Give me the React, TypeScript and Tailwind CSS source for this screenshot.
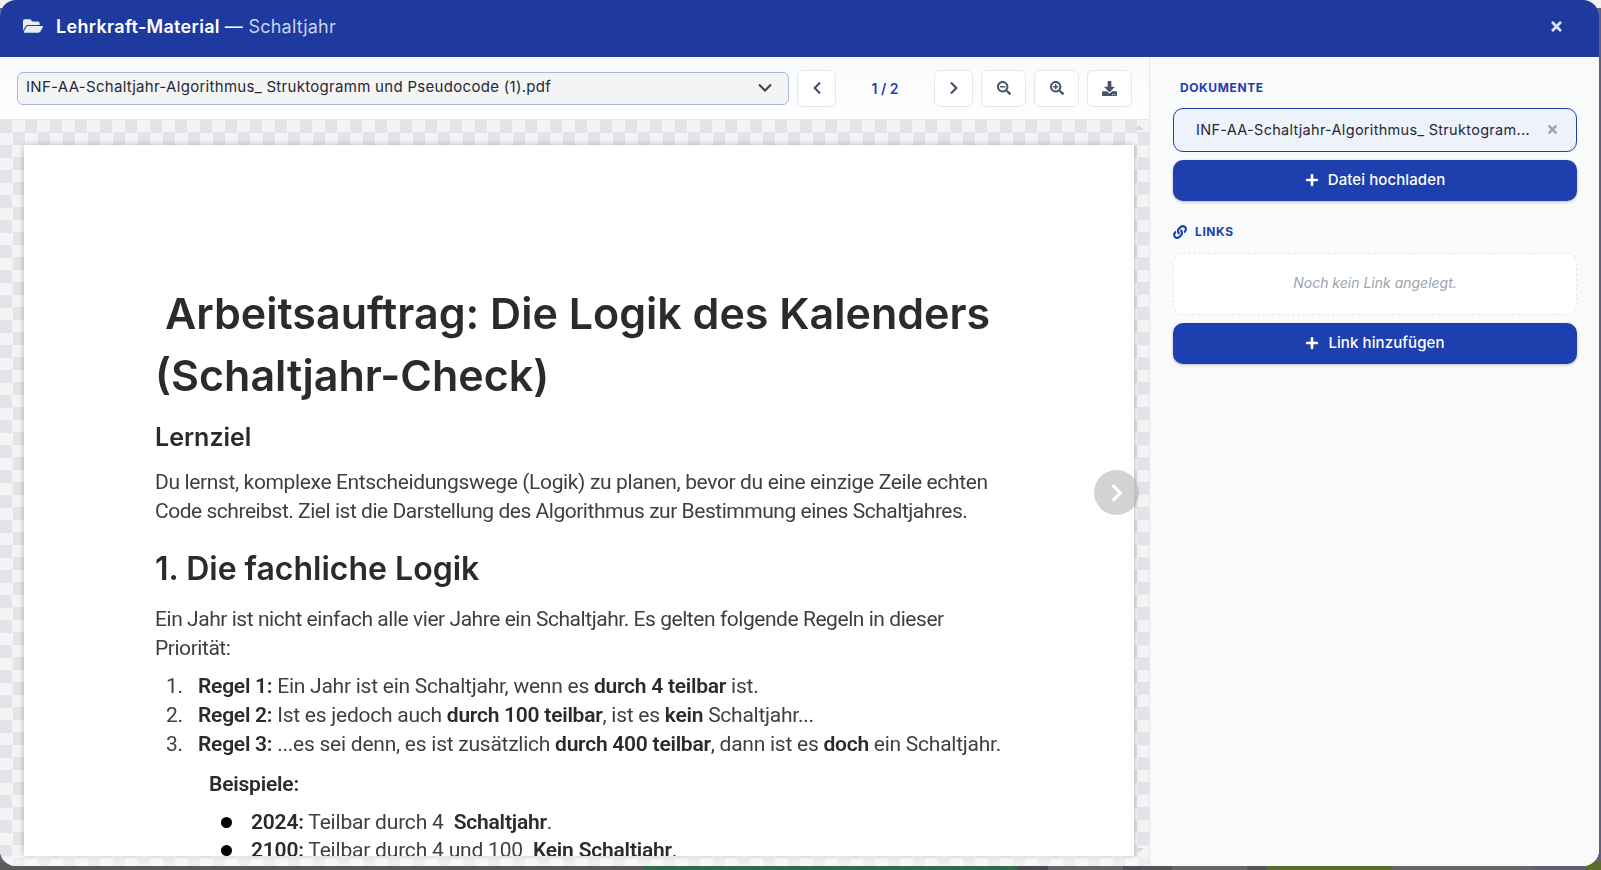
import { FaChevronLeft, FaChevronRight, FaDownload, FaFolderOpen, FaLink, FaPlus, FaSearchMinus, FaSearchPlus, FaTimes } from 'react-icons/fa';

const backdropStrip = [
  { width: 644, color: 'bg-[#5a5a5c]' },
  { width: 373, color: 'bg-[#2f6b4f]' },
  { width: 31, color: 'bg-[#4b4b50]' },
  { width: 75, color: 'bg-[#666668]' },
  { width: 19, color: 'bg-[#505054]' },
  { width: 30, color: 'bg-[#555558]' },
  { width: 75, color: 'bg-[#666668]' },
  { width: 20, color: 'bg-[#555558]' },
  { width: 125, color: 'bg-[#5a6b2a]' },
  { width: 141, color: 'bg-[#666668]' },
  { width: 52, color: 'bg-[#5e5e70]' },
  { width: 16, color: 'bg-[#5a6b2a]' },
];

function ToolButton({ className, children }: { className: string; children: React.ReactNode }) {
  return (
    <button className={`flex h-[37px] items-center justify-center rounded-md border border-[#e2e8f0] bg-white text-[#475569] ${className}`}>
      {children}
    </button>
  );
}

function BlueButton({ label }: { label: string }) {
  return (
    <button className="flex h-[41px] w-full items-center justify-center gap-[9px] rounded-[10px] bg-[#1e40af] pb-[1px] text-[15px] font-medium tracking-[0.1px] text-white shadow-[0_1px_3px_rgba(0,0,0,0.25)]">
      <FaPlus className="text-[14px]" />
      {label}
    </button>
  );
}

function Strong({ children }: { children: React.ReactNode }) {
  return <b className="font-semibold text-[#2b2b2b]">{children}</b>;
}

function PdfPage() {
  return (
    <div className="h-[711px] w-[1110px] overflow-hidden bg-white pl-[131px] pt-[137px] font-['Roboto',sans-serif] text-[#3f3f3f] shadow-[0_0_6px_rgba(0,0,0,0.25)]">
      <div className="blur-[0.4px]">
        <h1 className="w-[880px] font-['Inter',sans-serif] text-[43px] font-semibold leading-[62px] text-[#2b2b2b]">
          <span className="pl-[10px]">Arbeitsauftrag: Die Logik des Kalenders</span>
          <br />
          (Schaltjahr-Check)
        </h1>
        <h2 className="mt-[14px] font-['Inter',sans-serif] text-[25px] font-semibold leading-[34px] text-[#2b2b2b]">Lernziel</h2>
        <p className="mt-[14px] text-[21px] leading-[28.6px] tracking-[-0.36px]">
          Du lernst, komplexe Entscheidungswege (Logik) zu planen, bevor du eine einzige Zeile echten
          <br />
          <span className="tracking-[-0.47px]">Code schreibst. Ziel ist die Darstellung des Algorithmus zur Bestimmung eines Schaltjahres.</span>
        </p>
        <h2 className="mt-[23px] font-['Inter',sans-serif] text-[32px] font-semibold leading-[42px] text-[#2b2b2b]">1. Die fachliche Logik</h2>
        <p className="mt-[15px] text-[21px] leading-[28.6px] tracking-[-0.45px]">
          Ein Jahr ist nicht einfach alle vier Jahre ein Schaltjahr. Es gelten folgende Regeln in dieser
          <br />
          Priorität:
        </p>
        <ol className="mt-[10px] text-[21px] leading-[28.6px] tracking-[-0.25px]">
          <li className="flex"><span className="w-[43px] pl-[11px]">1.</span><span><Strong>Regel 1:</Strong> Ein Jahr ist ein Schaltjahr, wenn es <Strong>durch 4 teilbar</Strong> ist.</span></li>
          <li className="flex"><span className="w-[43px] pl-[11px]">2.</span><span><Strong>Regel 2:</Strong> Ist es jedoch auch <Strong>durch 100 teilbar</Strong>, ist es <Strong>kein</Strong> Schaltjahr...</span></li>
          <li className="flex"><span className="w-[43px] pl-[11px]">3.</span><span><Strong>Regel 3:</Strong> ...es sei denn, es ist zusätzlich <Strong>durch 400 teilbar</Strong>, dann ist es <Strong>doch</Strong> ein Schaltjahr.</span></li>
        </ol>
        <p className="ml-[54px] mt-[12px] text-[21px] font-semibold leading-[28.6px] tracking-[-0.2px] text-[#2b2b2b]">Beispiele:</p>
        <ul className="ml-[66px] mt-[9px] text-[21px] leading-[28.6px] tracking-[-0.2px]">
          <li className="flex items-center"><span className="mr-[19px] h-[11px] w-[11px] rounded-full bg-black" /><span><Strong>2024:</Strong> Teilbar durch 4 &nbsp;<Strong>Schaltjahr</Strong>.</span></li>
          <li className="flex items-center"><span className="mr-[19px] h-[11px] w-[11px] rounded-full bg-black" /><span><Strong>2100:</Strong> Teilbar durch 4 und 100 &nbsp;<Strong>Kein Schaltjahr</Strong>.</span></li>
        </ul>
      </div>
    </div>
  );
}

export default function App() {
  return (
    <div className="relative flex h-[870px] w-[1601px] flex-col overflow-hidden bg-[#5f6078] font-['Inter',sans-serif]">
      <div className="h-[8px] bg-[#f1f1f1]" />
      <div className="flex-1" />
      <div className="flex h-[8px]">
        {backdropStrip.map((seg, i) => (
          <div key={i} className={seg.color} style={{ width: seg.width }} />
        ))}
      </div>

      <div className="absolute left-0 top-0 flex h-[866px] w-[1599px] flex-col overflow-hidden rounded-[16px] bg-white">
        <header className="flex h-[57px] shrink-0 items-center bg-[#1e3a9f] pb-[5px] pl-[23px] pr-[35px] text-white">
          <FaFolderOpen className="text-[20px] opacity-90" />
          <span className="ml-[13px] text-[18px] font-semibold tracking-[0.3px]">Lehrkraft-Material</span>
          <span className="ml-[5px] text-[18px] tracking-[0.25px] text-[#c9d3f0]">
            <span className="text-white">—</span> Schaltjahr
          </span>
          <FaTimes className="ml-auto text-[15px] text-[#dbe2f7]" />
        </header>

        <div className="flex min-h-0 flex-1">
          <div className="flex w-[1150px] shrink-0 flex-col border-r border-[#e2e8f0]">
            <div className="flex h-[63px] shrink-0 items-center border-b border-[#e2e8f0] bg-gradient-to-b from-[#f8fafc] to-white pl-[17px]">
              <div className="flex h-[33px] w-[772px] items-center justify-between rounded-md border border-[#a9b7dc] bg-[#f4f4f5] pb-[1px] pl-[8px] pr-[16px] text-[15px] tracking-[0.3px] text-[#1f2937]">
                <span>INF-AA-Schaltjahr-Algorithmus_ Struktogramm und Pseudocode (1).pdf</span>
                <svg width="14" height="9" viewBox="0 0 14 9" fill="none" stroke="#374151" strokeWidth="2">
                  <path d="M1 1.5 7 7.5 13 1.5" />
                </svg>
              </div>
              <ToolButton className="ml-[8px] w-[39px]"><FaChevronLeft className="text-[14px]" /></ToolButton>
              <span className="w-[98px] text-center text-[14px] font-semibold text-[#1e40af]">1 / 2</span>
              <ToolButton className="w-[39px]"><FaChevronRight className="text-[14px]" /></ToolButton>
              <ToolButton className="ml-[8px] w-[45px]"><FaSearchMinus className="text-[14px]" /></ToolButton>
              <ToolButton className="ml-[8px] w-[45px]"><FaSearchPlus className="text-[14px]" /></ToolButton>
              <ToolButton className="ml-[8px] w-[45px]"><FaDownload className="text-[15px]" /></ToolButton>
            </div>

            <div className="relative min-h-0 flex-1 overflow-hidden bg-[conic-gradient(#f3f4f6_25%,#e3e4e8_0_50%,#f3f4f6_0_75%,#e3e4e8_0)] bg-[length:25px_25px] pl-[24px] pt-[25px]">
              <PdfPage />
              <div className="absolute bottom-0 left-0 right-0 h-[10px] bg-white/40" />
              <div className="absolute right-[5px] top-[5px] h-0 w-0 border-x-[5px] border-b-[5px] border-x-transparent border-b-[#d9dade]" />
              <div className="absolute bottom-[13px] right-[5px] h-0 w-0 border-x-[5px] border-t-[5px] border-x-transparent border-t-[#d9dade]" />
              <button className="absolute left-[1094px] top-[350px] flex h-[45px] w-[45px] items-center justify-center rounded-full bg-[#a8a8a8]/50 text-white">
                <FaChevronRight className="text-[20px]" />
              </button>
            </div>
          </div>

          <aside className="flex min-w-0 flex-1 flex-col bg-[#f8fafc] pl-[23px] pr-[22px] pt-[23px]">
            <h3 className="pl-[7px] text-[12px] font-bold leading-[16px] tracking-[0.6px] text-[#1e40af]">DOKUMENTE</h3>
            <div className="mt-[12px] flex h-[44px] items-center justify-between rounded-[10px] border border-[#1e40af] bg-[#eef2fb] pb-[1px] pl-[22px] pr-[17px] text-[14.5px] tracking-[0.3px] text-[#1f2937]">
              <span>INF-AA-Schaltjahr-Algorithmus_ Struktogram...</span>
              <FaTimes className="text-[13px] text-[#9ca3af]" />
            </div>
            <div className="mt-[8px]">
              <BlueButton label="Datei hochladen" />
            </div>
            <h3 className="mt-[23px] flex items-center gap-[8px] text-[12px] font-bold leading-[16px] tracking-[0.6px] text-[#1e40af]">
              <FaLink className="text-[14px]" />
              LINKS
            </h3>
            <div className="mt-[13px] flex h-[62px] items-center justify-center rounded-[10px] border border-dashed border-[#e2e8f0] bg-white pb-[4px] text-[14px] italic text-[#9ca3af]">
              Noch kein Link angelegt.
            </div>
            <div className="mt-[8px]">
              <BlueButton label="Link hinzufügen" />
            </div>
          </aside>
        </div>
      </div>
    </div>
  );
}
